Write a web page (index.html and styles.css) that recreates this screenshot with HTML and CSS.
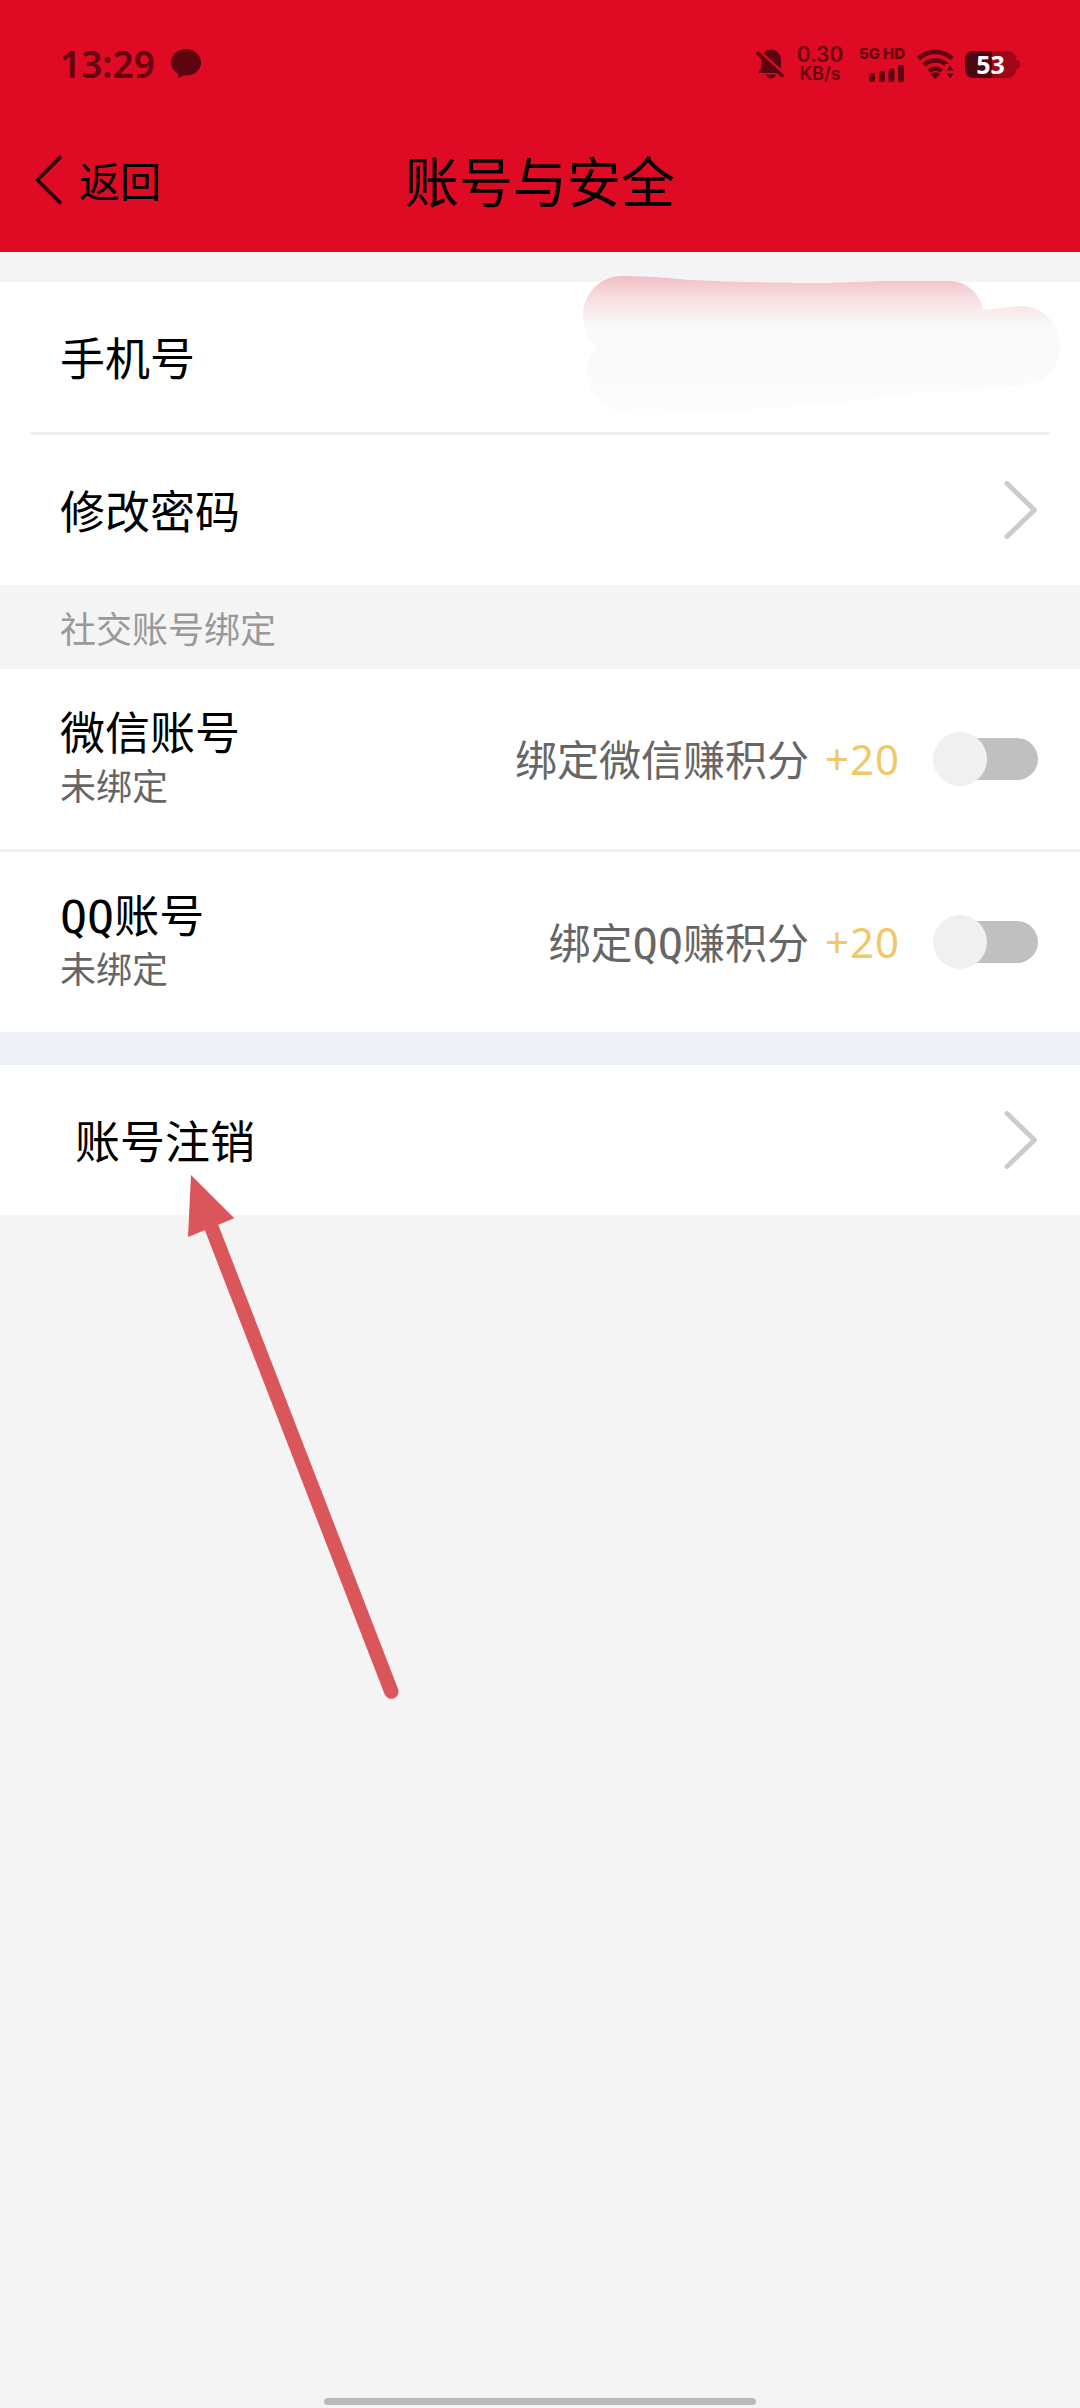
FILE: index.html
```html
<!DOCTYPE html>
<html lang="zh-CN">
<head>
<meta charset="utf-8">
<title>账号与安全</title>
<link rel="stylesheet" href="styles.css">
</head>
<body>
<header class="header">
  <div class="status">
    <div class="status-left">
      <span class="clock">13:29</span>
      <svg class="bubble" width="32" height="32" viewBox="0 0 32 32"><path d="M16 1C7.500 1 1 7 1 14.500c0 5 3 9 7.200 11.200V30l5.500-2.600C24 28.500 31 22.500 31 14.500 31 7 24.500 1 16 1z"/></svg>
    </div>
    <div class="status-right">
      <svg class="bell" width="30" height="32" viewBox="0 0 30 32"><path d="M15 1.500C20.500 1.500 25 6 25 12v13H3v-2l2.500-3V12C5.500 6 9.500 1.500 15 1.500zM10 26.500h10c-1 2.700-2.600 4-5 4s-4-1.300-5-4z"/><path d="M2.500 2.500 29 26.500" class="slash-gap"/><path d="M1 4.500 27 28.500" class="slash"/></svg>
      <div class="speed"><span class="speed-value">0.30</span><span class="speed-unit">KB/s</span></div>
      <div class="network">
        <span class="network-label">5G HD</span>
        <svg width="36" height="17" viewBox="0 0 36 17"><rect x="0" y="8" width="6" height="9" rx="2"/><rect x="10" y="6" width="6" height="11" rx="2"/><rect x="19.500" y="3.500" width="6" height="13.500" rx="2"/><rect x="29" y="0" width="6" height="17" rx="2"/></svg>
      </div>
      <svg class="wifi" width="38" height="31" viewBox="0 0 38 31"><g class="waves"><path d="M1.500 9.500C11 .8 25.500.8 35 9.500"/><path d="M6.800 16C13.200 10 23.500 10 30 16"/><path d="M12 22c3.600-3.400 9-3.400 12.600 0"/></g><path d="M18.300 30l-5-4.800c3-2.300 7-2.300 10 0z"/><path class="gap" d="M28 15h10v16H28z"/><path d="M33 16.500l3.600 5h-7.200zM33 29.500l3.600-5h-7.200z"/></svg>
      <div class="battery"><span>53</span></div>
    </div>
  </div>
  <nav class="nav">
    <div class="back">
      <svg width="28" height="50" viewBox="0 0 28 50"><path d="M26 1.500 2.500 25 26 48.500"/></svg>
      <span>返回</span>
    </div>
    <h1 class="title">账号与安全</h1>
  </nav>
</header>

<main class="content">
  <section class="group inset">
    <div class="row phone">
      <span class="label">手机号</span>
      <svg class="smudge" width="480" height="142" viewBox="582 275 480 142">
        <defs><linearGradient id="fade" gradientUnits="userSpaceOnUse" x1="0" y1="275" x2="0" y2="416">
          <stop offset="0" stop-color="#f0bcc3"/><stop offset=".07" stop-color="#f4cbd1"/><stop offset=".15" stop-color="#f6dcdf"/><stop offset=".24" stop-color="#f8e9ea"/><stop offset=".33" stop-color="#faf6f6"/><stop offset=".39" stop-color="#fafafa"/><stop offset=".65" stop-color="#fafafa"/><stop offset="1" stop-color="#fcfdfd"/>
        </linearGradient></defs>
        <path fill="url(#fade)" d="M622 276Q650 276 690 280C760 283 830 284 880 281L949 281C967 281 980 294 983.500 310L1019 306C1043 306 1060 324 1060 346C1060 366 1046 383 1024 385L980 389Q945 393 913 393Q840 404 760 409Q690 415 635 414.500C607 414 587 396 587 372Q587 358 597 347Q583 336 583 315C583 294 600 276 622 276Z"/>
      </svg>
    </div>
    <div class="divider"></div>
    <div class="row">
      <span class="label">修改密码</span>
      <svg class="chevron" width="34" height="58" viewBox="0 0 34 58"><path d="M3 2.500 30.500 29 3 55.500"/></svg>
    </div>
  </section>

  <h2 class="section-title">社交账号绑定</h2>

  <section class="group">
    <div class="row social">
      <div class="account"><span class="label">微信账号</span><span class="state">未绑定</span></div>
      <div class="bonus"><span class="offer">绑定微信赚积分</span><span class="points">+20</span></div>
      <span class="toggle"></span>
    </div>
    <div class="divider"></div>
    <div class="row social">
      <div class="account"><span class="label">QQ账号</span><span class="state">未绑定</span></div>
      <div class="bonus"><span class="offer">绑定QQ赚积分</span><span class="points">+20</span></div>
      <span class="toggle"></span>
    </div>
  </section>

  <section class="group cancel">
    <div class="row">
      <span class="label">账号注销</span>
      <svg class="chevron" width="34" height="58" viewBox="0 0 34 58"><path d="M3 2.500 30.500 29 3 55.500"/></svg>
    </div>
    <svg class="pointer" width="220" height="530" viewBox="185 1172 220 530"><path d="M191 1175 234.300 1218.300 188 1237z"/><path class="shaft" d="M211 1226 391.300 1691.500"/></svg>
  </section>
</main>
<div class="home-bar"></div>
</body>
</html>
```
FILE: styles.css
```css
* { box-sizing: border-box; }

body {
  margin: 0;
  width: 1080px;
  height: 2408px;
  display: flex;
  flex-direction: column;
  background: #f4f4f4;
  color: #000;
  font-family: "Noto Sans CJK SC", sans-serif;
  overflow: hidden;
}

svg { display: block; flex: none; }
span, h1, h2 { white-space: nowrap; }

.header {
  height: 252px;
  background: #df0a24;
}

.status {
  height: 112px;
  padding: 16px 60px 0;
  display: flex;
  justify-content: space-between;
  align-items: center;
  color: #65040f;
  fill: #5d0410;
  font-family: "Noto Sans", sans-serif;
  font-weight: 600;
}

.status-left, .status-right { display: flex; align-items: center; }
.clock { width: 110px; font-size: 37px; line-height: 40px; }
.status-right { height: 44px; }
.bell { margin-right: 9px; }
.slash-gap { fill: none; stroke: #df0a24; stroke-width: 3; }
.slash { fill: none; stroke: #5d0410; stroke-width: 3.5; }

.speed {
  width: 50px;
  margin-right: 11px;
  display: flex;
  flex-direction: column;
  align-items: center;
  font-family: Inter, sans-serif;
}
.speed-value { font-size: 21px; line-height: 20px; }
.speed-unit { font-size: 18px; line-height: 18px; }

.network {
  width: 49px;
  margin-right: 12px;
  display: flex;
  flex-direction: column;
  align-items: flex-end;
  gap: 4px;
}
.network-label { font: 800 15px/15px Inter, sans-serif; letter-spacing: -.1px; }

.waves { fill: none; stroke: #5d0410; stroke-width: 4.5; }
.gap { fill: #df0a24; }
.wifi { margin-right: 10px; }

.battery {
  position: relative;
  width: 51px;
  height: 27px;
  margin-right: 4px;
  border-radius: 8px;
  background: linear-gradient(90deg, #4d0511 27px, #9e0718 27px);
  color: #fff;
  font: 700 25px/27px "Noto Sans", sans-serif;
  text-align: center;
}
.battery::after {
  content: "";
  position: absolute;
  right: -4px;
  top: 9px;
  width: 4px;
  height: 9px;
  border-radius: 0 4px 4px 0;
  background: #9e0718;
}

.nav {
  height: 140px;
  padding: 0 35px 4px;
  display: grid;
  grid-template-columns: 1fr auto 1fr;
  align-items: center;
}
.back { display: flex; align-items: center; gap: 16px; font-size: 41px; line-height: 60px; }
.back path { fill: none; stroke: #200006; stroke-width: 3.5; }
.back span { padding-bottom: 2px; }
.title { margin: 0; font-size: 54px; line-height: 72px; font-weight: 400; }

.content { padding-top: 30px; }
.group { background: #fff; }
.row {
  height: 150px;
  padding: 0 42px 0 60px;
  display: flex;
  align-items: center;
  justify-content: space-between;
}
.divider { height: 3px; background: #eef1f3; }
.inset .divider { margin: 0 30px; }
.label { font-family: "DejaVu Sans Mono", "Noto Sans CJK SC", sans-serif; font-size: 45px; line-height: 60px; }
.row > .label { padding-top: 8px; }

.phone { position: relative; }
.smudge { position: absolute; left: 582px; top: -7px; }
.chevron path { fill: none; stroke: #ccc; stroke-width: 5; stroke-linecap: round; stroke-linejoin: round; }

.section-title {
  height: 84px;
  margin: 0;
  padding-left: 60px;
  font-size: 36px;
  line-height: 84px;
  font-weight: 400;
  color: #999;
}

.social { height: 180px; }
.account { flex: 1; display: flex; flex-direction: column; padding-bottom: 10px; }
.state { font-size: 36px; line-height: 38px; color: #666; }
.bonus {
  display: flex;
  align-items: center;
  gap: 16px;
  margin-right: 33px;
  color: #666;
  font-family: "DejaVu Sans Mono", "Noto Sans CJK SC", sans-serif;
  font-size: 42px;
  line-height: 60px;
}
.offer { padding-top: 6px; }
.points { width: 75px; color: #f0c868; font-family: "Noto Sans", sans-serif; letter-spacing: 1px; }

.toggle {
  position: relative;
  width: 105px;
  height: 54px;
  display: flex;
  align-items: center;
}
.toggle::before { content: ""; width: 96px; height: 42px; margin-left: 9px; border-radius: 21px; background: #c0c0c0; }
.toggle::after { content: ""; position: absolute; left: 0; top: 0; width: 54px; height: 54px; border-radius: 50%; background: #f0f0f0; }

.cancel { position: relative; border-top: 33px solid #edf1f5; }
.cancel .row { padding-left: 75px; }
.pointer { position: absolute; left: 185px; top: 107px; fill: #db565a; }
.shaft { stroke: #db565a; stroke-width: 14.500; stroke-linecap: round; }

.home-bar {
  width: 432px;
  height: 7px;
  margin: auto auto 3px;
  border-radius: 4px;
  background: #bababa;
}
```
